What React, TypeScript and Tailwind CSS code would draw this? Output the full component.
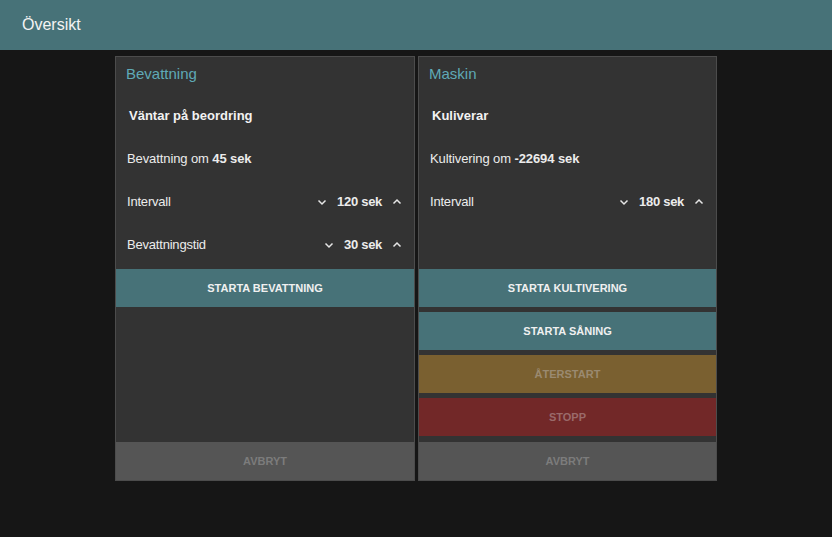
const font = { fontFamily: '"Liberation Sans", Arial, sans-serif' };

function ChevronDown() {
  return (
    <svg width="10" height="10" viewBox="0 0 10 10" className="shrink-0">
      <polyline points="1.5,3.5 5,7 8.5,3.5" fill="none" stroke="#e6e6e6" strokeWidth="1.5" />
    </svg>
  );
}

function ChevronUp() {
  return (
    <svg width="10" height="10" viewBox="0 0 10 10" className="shrink-0">
      <polyline points="1.5,6.5 5,3 8.5,6.5" fill="none" stroke="#e6e6e6" strokeWidth="1.5" />
    </svg>
  );
}

function Stepper({ label, value }: { label: string; value: string }) {
  return (
    <div className="flex h-[43px] items-center justify-between pl-[11px] pr-[12px] text-[13px] text-[#ececec]">
      <span className="tracking-[-0.2px]">{label}</span>
      <div className="flex items-center gap-[10px]">
        <ChevronDown />
        <span className="font-bold tracking-[-0.3px]">{value}</span>
        <ChevronUp />
      </div>
    </div>
  );
}

type Btn = { label: string; cls: string };

function Button({ label, cls }: Btn) {
  return (
    <button
      type="button"
      className={`flex h-[38px] w-full items-center justify-center text-[11px] font-bold uppercase ${cls}`}
    >
      {label}
    </button>
  );
}

function Card({
  title,
  status,
  countdown,
  value,
  steppers,
  buttons,
  widthClass,
}: {
  title: string;
  status: string;
  countdown: string;
  value: string;
  steppers: { label: string; value: string }[];
  buttons: Btn[];
  widthClass: string;
}) {
  return (
    <div className={`flex h-[425px] flex-col border border-[#4c4c4c] bg-[#333333] ${widthClass}`}>
      <div className="flex h-[37px] items-center px-[10px] pb-[3px] text-[15px] text-[#5fa9b6]">{title}</div>
      <div className="flex h-[43px] items-center px-[13px] text-[13px] font-bold text-[#f2f2f2]">
        {status}
      </div>
      <div className="flex h-[43px] items-center px-[11px] text-[13px] tracking-[-0.1px] text-[#ececec]">
        {countdown}&nbsp;<span className="font-bold">{value}</span>
      </div>
      {steppers.map((s) => (
        <Stepper key={s.label} label={s.label} value={s.value} />
      ))}
      {steppers.length < 2 && <div className="h-[43px]" />}
      <div className="mt-[3px] flex flex-col gap-[5px]">
        {buttons.map((b) => (
          <Button key={b.label} label={b.label} cls={b.cls} />
        ))}
      </div>
      <div className="mt-auto">
        <Button label="Avbryt" cls="bg-[#555555] text-[#7c7c7c]" />
      </div>
    </div>
  );
}

const teal = "bg-[#477278] text-[#f0f0f0]";

export default function App() {
  return (
    <div className="min-h-[537px] bg-[#161616]" style={font}>
      <header className="flex h-[50px] items-center bg-[#477278] px-[22px] text-[16px] text-[#f4f4f4]">
        Översikt
      </header>
      <main className="flex justify-center gap-[3px] pt-[6px]">
        <Card
          widthClass="w-[300px]"
          title="Bevattning"
          status="Väntar på beordring"
          countdown="Bevattning om"
          value="45 sek"
          steppers={[
            { label: "Intervall", value: "120 sek" },
            { label: "Bevattningstid", value: "30 sek" },
          ]}
          buttons={[{ label: "Starta bevattning", cls: teal }]}
        />
        <Card
          widthClass="w-[299px]"
          title="Maskin"
          status="Kuliverar"
          countdown="Kultivering om"
          value="-22694 sek"
          steppers={[{ label: "Intervall", value: "180 sek" }]}
          buttons={[
            { label: "Starta kultivering", cls: teal },
            { label: "Starta såning", cls: teal },
            { label: "Återstart", cls: "bg-[#7a6030] text-[#9a8a70]" },
            { label: "Stopp", cls: "bg-[#722828] text-[#9a6a6a]" },
          ]}
        />
      </main>
    </div>
  );
}
